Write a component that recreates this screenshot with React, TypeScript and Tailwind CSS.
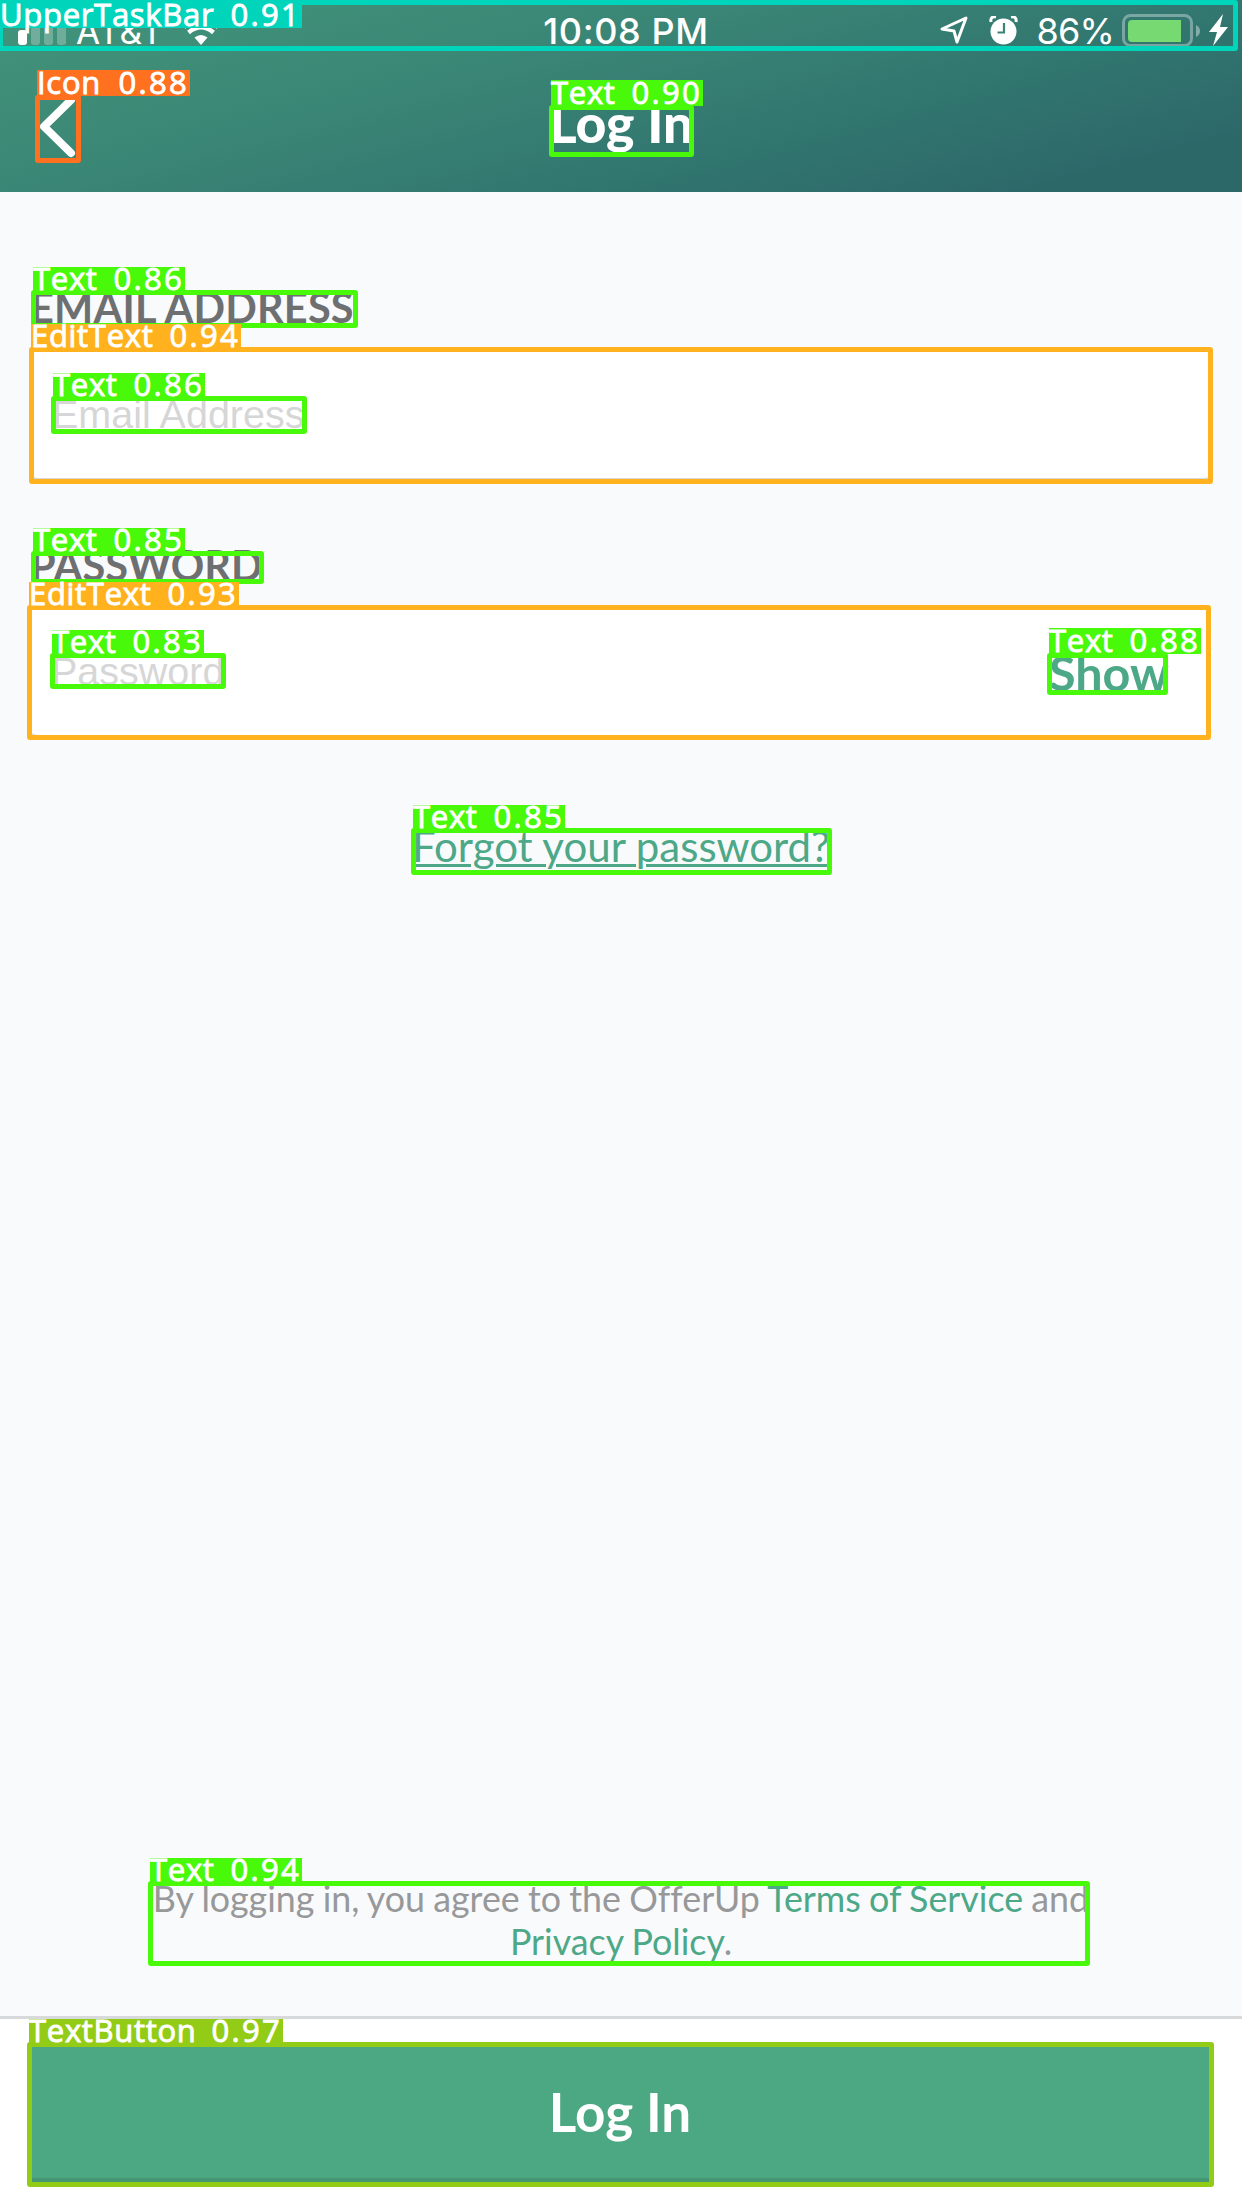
import React from "react";

type Tone = "teal" | "orange" | "green" | "amber" | "lime";

const tones: Record<Tone, { line: string; fill: string }> = {
  teal: { line: "border-[#00d4bb]", fill: "bg-[#00d4bb]" },
  orange: { line: "border-[#ff701f]", fill: "bg-[#ff701f]" },
  green: { line: "border-[#48f90a]", fill: "bg-[#48f90a]" },
  amber: { line: "border-[#ffb21d]", fill: "bg-[#ffb21d]" },
  lime: { line: "border-[#92cc17]", fill: "bg-[#92cc17]" },
};

interface Detection {
  name: string;
  score: string;
  tone: Tone;
  box: [number, number, number, number];
  tag: [number, number, number, number];
}

// Boxes and tags are [left, top, right, bottom].
const detections: Detection[] = [
  { name: "UpperTaskBar", score: "0.91", tone: "teal", box: [-2, 0, 1238, 51], tag: [0, 0, 302, 28] },
  { name: "Icon", score: "0.88", tone: "orange", box: [35, 95, 81, 163], tag: [37, 70, 190, 96] },
  { name: "Text", score: "0.90", tone: "green", box: [549, 105, 694, 157], tag: [551, 80, 703, 106] },
  { name: "Text", score: "0.86", tone: "green", box: [31, 290, 358, 328], tag: [33, 267, 185, 292] },
  { name: "EditText", score: "0.94", tone: "amber", box: [29, 347, 1213, 484], tag: [31, 324, 241, 349] },
  { name: "Text", score: "0.86", tone: "green", box: [51, 396, 307, 434], tag: [53, 373, 205, 398] },
  { name: "Text", score: "0.85", tone: "green", box: [31, 551, 264, 584], tag: [33, 528, 185, 553] },
  { name: "EditText", score: "0.93", tone: "amber", box: [27, 605, 1211, 740], tag: [29, 582, 239, 607] },
  { name: "Text", score: "0.83", tone: "green", box: [50, 653, 226, 689], tag: [52, 630, 204, 655] },
  { name: "Text", score: "0.88", tone: "green", box: [1047, 653, 1168, 695], tag: [1049, 628, 1201, 654] },
  { name: "Text", score: "0.85", tone: "green", box: [411, 828, 832, 875], tag: [413, 805, 565, 830] },
  { name: "Text", score: "0.94", tone: "green", box: [148, 1881, 1090, 1966], tag: [150, 1858, 302, 1883] },
  { name: "TextButton", score: "0.97", tone: "lime", box: [27, 2042, 1214, 2187], tag: [29, 2019, 283, 2044] },
];

function Marker({ d }: { d: Detection }) {
  const [l, t, r, b] = d.box;
  const [tl, tt, tr, tb] = d.tag;
  return (
    <>
      <div
        className={"absolute rounded-[3px] border-[5px] " + tones[d.tone].line}
        style={{ left: l, top: t, width: r - l, height: b - t }}
      />
      <div
        className={
          "absolute flex items-end justify-between pr-px font-['Open_Sans',sans-serif] text-[31px] leading-none whitespace-nowrap text-white [-webkit-text-stroke:0.9px_white] " +
          tones[d.tone].fill
        }
        style={{ left: tl, top: tt, width: tr - tl, height: tb - tt }}
      >
        <span className="-mb-[2px] tracking-[0.7px]">{d.name}</span>
        <span className="-mb-[2px] tracking-[2.3px]">{d.score}</span>
      </div>
    </>
  );
}

function StatusBar() {
  return (
    <div className="grid h-[60px] grid-cols-3 px-[18px] font-[Inter,sans-serif] text-white">
      <div className="flex h-[62px] items-center">
        <div className="flex items-end gap-1">
          <i className="h-[15px] w-[9px] rounded-[3px] bg-white" />
          <i className="h-[20px] w-[9px] rounded-[3px] bg-white/25" />
          <i className="h-[24px] w-[9px] rounded-[3px] bg-white/25" />
          <i className="h-[28px] w-[9px] rounded-[3px] bg-white/25" />
        </div>
        <span className="ml-[10px] text-[35px] tracking-[0.5px]">AT&amp;T</span>
        <svg className="ml-[18px] h-7 w-[38px]" viewBox="0 0 38 28" fill="none">
          <path d="M2 10Q19-5 36 10M6.500 15.500Q19 5 31.500 15.500" stroke="white" strokeWidth="4.5" />
          <path d="M12.500 20.500Q19 15.500 25.500 20.500L19 28Z" fill="white" />
        </svg>
      </div>
      <div className="flex h-[62px] items-center justify-center pl-[10px] text-[36px] font-medium tracking-[0.6px]">10:08 PM</div>
      <div className="-mr-[4px] flex h-[60px] items-center justify-end">
        <svg className="h-[29px] w-[29px]" viewBox="0 0 29 29" fill="none" stroke="white" strokeWidth="3" strokeLinejoin="round">
          <path d="M2 13L26 2L17 26L14 15Z" />
        </svg>
        <svg className="ml-[20px] h-[29px] w-[29px]" viewBox="0 0 29 29">
          <circle cx="14.5" cy="15.5" r="13" fill="white" />
          <path d="M2 6Q1 0 7 1M22 1Q28 0 27 6" stroke="white" strokeWidth="3" fill="none" />
          <path d="M15 7V16.5H8.5" stroke="#3b8475" strokeWidth="2.2" fill="none" />
        </svg>
        <span className="mt-[2px] ml-[18px] text-[36px] tracking-[-0.8px]">86%</span>
        <svg className="ml-[8px] h-[33px] w-[79px]" viewBox="0 0 79 33">
          <rect x="1.5" y="1.5" width="68" height="30" rx="7" fill="none" stroke="white" strokeOpacity=".35" strokeWidth="3" />
          <path d="M10 6H59V28H10Q6 28 6 24V10Q6 6 10 6" fill="#76d972" />
          <path d="M74 11Q78 13 78 17Q78 21 74 23Z" fill="white" fillOpacity=".4" />
        </svg>
        <svg className="ml-[8px] h-[32px] w-[19px]" viewBox="0 0 19 32">
          <path d="M14 0L0 18H8L4 32L19 13H11Z" fill="white" />
        </svg>
      </div>
    </div>
  );
}

export default function App() {
  return (
    <div className="relative flex h-[2208px] w-[1242px] flex-col overflow-hidden bg-[#f9fafc] font-[Lato,sans-serif]">
      <header className="h-48 shrink-0 bg-[linear-gradient(165deg,#42957a_0%,#3b8776_35%,#31756f_67%,#2d6869_89%)]">
        <StatusBar />
        <div className="grid h-[132px] grid-cols-3 items-start px-[39px] text-white">
          <svg className="mt-[36px] h-[63px] w-[38px]" viewBox="0 0 38 63" fill="none" stroke="white" strokeWidth="8" strokeLinecap="round" strokeLinejoin="round">
            <path d="M32 4L5 30.500L32 57" />
          </svg>
          <h1 className="mt-[32px] text-center text-[53.5px] leading-[60px] font-black">Log In</h1>
        </div>
      </header>

      <main className="flex grow flex-col px-[30px]">
        <label className="mt-[91px] text-[41.5px] leading-[48px] font-bold tracking-[0.2px] text-[#6e6f71]">EMAIL ADDRESS</label>
        <div className="mt-[19px] flex h-[130px] items-start rounded-lg border-b-2 border-[#d8d8d8] bg-white pt-[40px] pl-[22px] font-['Liberation_Sans',sans-serif] text-[39.5px] leading-[48px] text-[#d6d6d6]">
          Email Address
        </div>
        <label className="mt-[61px] text-[41.5px] leading-[48px] font-bold text-[#6e6f71]">PASSWORD</label>
        <div className="mt-[18px] flex h-[130px] items-start justify-between rounded-lg border-b-2 border-[#d8d8d8] bg-white pt-[40px] pr-[43px] pl-[21px]">
          <span className="font-['Liberation_Sans',sans-serif] text-[39.5px] leading-[48px] text-[#d6d6d6]">Password</span>
          <span className="-mt-[2px] text-[48.5px] leading-[54px] font-bold text-[#4da888]">Show</span>
        </div>
        <a className="mt-[81px] self-center text-[42px] leading-[56px] text-[#4da888] underline decoration-[3px] underline-offset-[2px]">
          Forgot your password?
        </a>
        <p className="mt-auto mb-[53px] text-center text-[35.8px] leading-[43px] [word-spacing:-0.9px] text-[#979899] [font-variant-ligatures:none]">
          By logging in, you agree to the OfferUp <span className="text-[#4da888]">Terms of Service</span> and
          <br />
          <span className="text-[#4da888]">Privacy Policy</span>.
        </p>
      </main>

      <footer className="h-[192px] shrink-0 border-t-[3px] border-[#d7d9db] bg-white px-[30px] pt-[26px]">
        <button className="block h-[139px] w-full rounded-md border-b-6 border-[#459673] bg-[#4ba883] pr-[2px] text-[53px] leading-[132px] font-bold text-white">Log In</button>
      </footer>

      {detections.map((d, i) => (
        <Marker key={i} d={d} />
      ))}
    </div>
  );
}
